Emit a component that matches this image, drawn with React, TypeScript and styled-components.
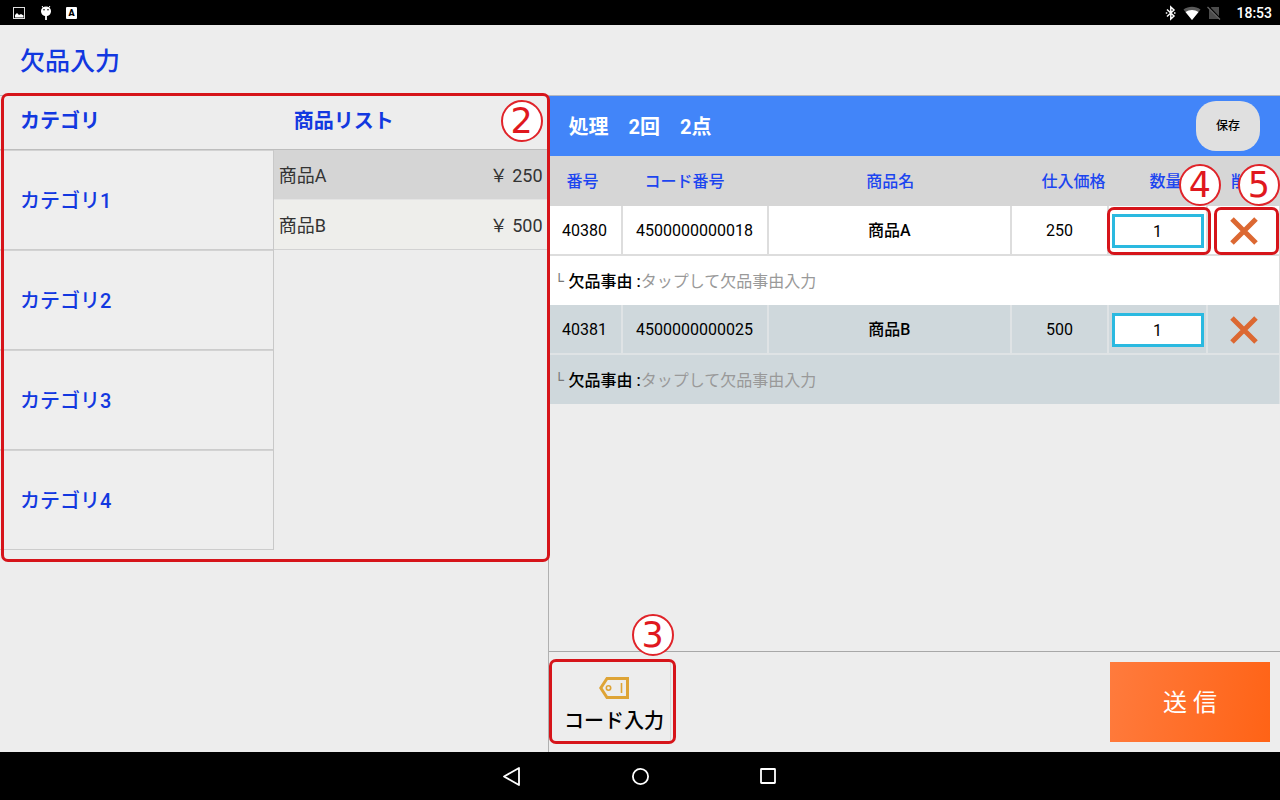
import React, { useState } from "react";
import styled, { createGlobalStyle } from "styled-components";

const GlobalStyle = createGlobalStyle`
  *, *::before, *::after { box-sizing: border-box; }
  body {
    margin: 0;
    background: #ededed;
    color: #000;
    font-family: Roboto, "Noto Sans CJK JP", sans-serif;
  }
  button, input { font: inherit; color: inherit; }
  button { border: 0; padding: 0; background: none; cursor: pointer; }
`;

const Screen = styled.div`
  display: flex;
  flex-direction: column;
  min-height: 100vh;
`;

const StatusBar = styled.div`
  display: flex;
  align-items: center;
  justify-content: space-between;
  height: 25px;
  padding: 0 8px 0 12px;
  background: #000;
  color: #fff;
`;

const StatusGroup = styled.div<{ $gap: number }>`
  display: flex;
  align-items: center;
  gap: ${(p) => p.$gap}px;
`;

const Clock = styled.time`
  margin-left: 9px;
  font-size: 14px;
  font-weight: 500;
  line-height: 20px;
`;

const TitleBar = styled.header`
  display: flex;
  align-items: center;
  height: 71px;
  padding: 4px 20px 0;
  border-bottom: 1px solid #b4b8c0;
`;

const Title = styled.h1`
  margin: 0;
  color: #1238e0;
  font-size: 25px;
  font-weight: 500;
  line-height: 32px;
`;

const Main = styled.main`
  flex: 1;
  display: grid;
  grid-template-columns: 3fr 4fr;
`;

const LeftPane = styled.section`
  border-right: 1px solid #b0b0b0;
`;

const Browser = styled.div`
  position: relative;
`;

const BrowserHead = styled.div`
  display: grid;
  grid-template-columns: 1fr 1fr;
  align-items: center;
  height: 54px;
  padding-bottom: 4px;
  border-bottom: 1px solid #bdbdbd;
`;

const PaneTitle = styled.h2`
  margin: 0;
  padding-left: 20px;
  color: #1238e0;
  font-size: 20px;
  font-weight: 700;
  line-height: 28px;
`;

const BrowserBody = styled.div`
  display: grid;
  grid-template-columns: 1fr 1fr;
  align-items: start;
`;

const CategoryList = styled.ul`
  margin: 0;
  padding: 0;
  list-style: none;
  border-right: 1px solid #c8c8c8;
`;

const CategoryButton = styled.button`
  display: block;
  width: 100%;
  height: 100px;
  padding: 2px 0 0 20px;
  border-top: 1px solid #d2d2d2;
  border-bottom: 1px solid #cccccc;
  background: #eeeeee;
  color: #1238e0;
  font-size: 20px;
  font-weight: 500;
  line-height: 28px;
  text-align: left;
`;

const ProductList = styled.ul`
  margin: 0;
  padding: 0;
  list-style: none;
`;

const ProductButton = styled.button<{ $active?: boolean }>`
  display: flex;
  align-items: center;
  justify-content: space-between;
  width: 100%;
  height: 50px;
  padding: 2px 5px 0;
  border-bottom: 1px solid ${(p) => (p.$active ? "#e4e4e4" : "#d2d2d2")};
  background: ${(p) => (p.$active ? "#d5d5d5" : "#eeeeeb")};
  color: #333;
  font-size: 18px;
  line-height: 26px;
`;

const RightPane = styled.section`
  display: flex;
  flex-direction: column;
`;

const SummaryBar = styled.div`
  display: flex;
  align-items: center;
  justify-content: space-between;
  height: 60px;
  padding: 0 20px;
  background: #4285f9;
`;

const Summary = styled.p`
  margin: 0;
  padding-top: 2px;
  color: #fff;
  font-size: 20px;
  font-weight: 700;
  line-height: 28px;
  white-space: pre;
`;

const SaveButton = styled.button`
  width: 64px;
  height: 50px;
  border-radius: 20px;
  background: #e0e0e0;
  color: #000;
  font-size: 12px;
  font-weight: 500;
  line-height: 16px;
`;

const OrderTable = styled.table`
  width: 100%;
  table-layout: fixed;
  border-collapse: separate;
  border-spacing: 0;
  font-size: 16px;
  line-height: 24px;
`;

const Col = styled.col<{ $width?: number }>`
  width: ${(p) => (p.$width ? `${p.$width}px` : "auto")};
`;

const HeadCell = styled.th<{ $before?: number; $after?: number }>`
  height: 50px;
  padding: 2px ${(p) => p.$after ?? 0}px 0 ${(p) => p.$before ?? 0}px;
  background: #d6d6d6;
  color: #1c45f0;
  font-weight: 500;
  text-align: center;
  white-space: nowrap;
`;

const OrderRows = styled.tbody<{ $shaded: boolean }>`
  --line: ${(p) => (p.$shaded ? "#dfe3e5" : "#dddddd")};
  background: ${(p) => (p.$shaded ? "#cfd8dc" : "#ffffff")};
`;

const Cell = styled.td<{ $strong?: boolean }>`
  position: relative;
  height: 50px;
  padding: 2px 0 0;
  border-right: 2px solid var(--line);
  border-bottom: 2px solid var(--line);
  font-weight: ${(p) => (p.$strong ? 500 : 400)};
  text-align: center;
  &:last-of-type { border-right-width: 1px; }
`;

const ReasonCell = styled.td`
  height: 49px;
  padding: 2px 6px 0;
  border-right: 1px solid var(--line);
`;

const ReasonLine = styled.div`
  display: flex;
  align-items: center;
`;

const Branch = styled.span`
  width: 14px;
  color: #777;
  font-family: "Liberation Mono", monospace;
  font-size: 16px;
`;

const ReasonLabel = styled.span`
  font-weight: 500;
  white-space: pre;
`;

const ReasonButton = styled.button`
  color: #999;
`;

const QuantityInput = styled.input`
  display: block;
  width: 92px;
  max-width: 100%;
  height: 34px;
  margin: 0 auto;
  padding: 0;
  border: 3px solid #2ab9e0;
  background: #fff;
  text-align: center;
  outline: none;
`;

const IconButton = styled.button`
  display: inline-flex;
  align-items: center;
  justify-content: center;
  vertical-align: middle;
`;

const Footer = styled.footer`
  display: flex;
  justify-content: space-between;
  margin-top: auto;
  padding: 10px;
  border-top: 1px solid #a8a8a8;
`;

const CodeEntry = styled.div`
  position: relative;
  display: flex;
`;

const CodeButton = styled.button`
  display: flex;
  flex-direction: column;
  align-items: center;
  justify-content: center;
  gap: 8px;
  width: 112px;
  height: 80px;
  padding-top: 8px;
  border-right: 1px solid #dadada;
  border-bottom: 1px solid #dadada;
  color: #000;
  font-size: 20px;
  font-weight: 500;
  line-height: 28px;
`;

const SendButton = styled.button`
  width: 160px;
  height: 80px;
  padding-top: 2px;
  background: linear-gradient(100deg, #ff7b3d, #ff6316);
  color: #fff;
  font-size: 24px;
  line-height: 32px;
`;

const Callout = styled.div<{ $inset: string }>`
  position: absolute;
  inset: ${(p) => p.$inset};
  z-index: 1;
  border: 3px solid #d6141a;
  border-radius: 7px;
  pointer-events: none;
`;

const CalloutNumber = styled.span<{ $top: number; $right: number }>`
  position: absolute;
  top: ${(p) => p.$top}px;
  right: ${(p) => p.$right}px;
  display: flex;
  align-items: center;
  justify-content: center;
  width: 42px;
  height: 42px;
  border: 2px solid #e0242a;
  border-radius: 50%;
  background: #fff;
  color: #e0181e;
  font-family: "DejaVu Sans", sans-serif;
  font-size: 35px;
  font-weight: 400;
  line-height: 38px;
`;

const NavBar = styled.nav`
  display: flex;
  justify-content: center;
  height: 48px;
  background: #000;
`;

const NavButton = styled.button`
  display: flex;
  align-items: center;
  justify-content: center;
  width: 128px;
`;

const PictureIcon = () => (
  <svg width="14" height="14" viewBox="0 0 14 14" aria-hidden="true">
    <rect x="1.5" y="1.5" width="11" height="11" fill="none" stroke="#ddd" />
    <path d="M3 11.500V9l2-2 2 2 2-1 2.500 1.500v2z" fill="#fff" />
  </svg>
);

const DroidIcon = () => (
  <svg width="12" height="16" viewBox="0 0 12 16" aria-hidden="true">
    <path d="M2 1l1.500 2M10 1l-1.500 2" stroke="#fff" strokeWidth="1" />
    <path d="M1 6a5 4.500 0 0 1 10 0c0 3-2 5-5 5S1 9 1 6z" fill="#fff" />
    <circle cx="4" cy="4.800" r="0.800" />
    <circle cx="8" cy="4.800" r="0.800" />
    <path d="M6 11v4" stroke="#fff" strokeWidth="1.800" />
  </svg>
);

const LetterBadge = styled.span`
  display: flex;
  align-items: center;
  justify-content: center;
  width: 11px;
  height: 12px;
  border-radius: 1px;
  background: #fff;
  color: #000;
  font-size: 9px;
  font-weight: 900;
  line-height: 12px;
`;

const BluetoothIcon = () => (
  <svg width="12" height="16" viewBox="0 0 12 16" aria-hidden="true">
    <path
      d="M2 4.500l7 6.500-3.200 3V2L9 5l-7 6.500"
      fill="none"
      stroke="#fff"
      strokeWidth="1.500"
    />
    <path d="M0.800 7.300h1.500v1.400H0.800zM9 7.300h1.500v1.400H9z" fill="#fff" />
  </svg>
);

const WifiIcon = () => (
  <svg width="18" height="14" viewBox="0 0 18 14" aria-hidden="true">
    <path d="M9 14L0.500 3.500C5.500-0.200 12.500-0.200 17.500 3.500z" fill="#5a5a5a" />
    <path d="M9 14L2.500 6c3.800-2.800 9.200-2.800 13 0z" fill="#fff" />
  </svg>
);

const NoSimIcon = () => (
  <svg width="14" height="14" viewBox="0 0 14 14" aria-hidden="true">
    <path d="M4.500 1H12v12H2V3.500z" fill="#4c4c4c" />
    <path d="M1.500 0.500l12 12.500" stroke="#000" strokeWidth="1.600" />
    <path d="M0.500 1l12.500 12.500" stroke="#666" strokeWidth="1.200" />
  </svg>
);

const CrossIcon = () => (
  <svg width="28" height="28" viewBox="0 0 28 28" aria-hidden="true">
    <path d="M2 2l24 24M26 2L2 26" stroke="#dc6832" strokeWidth="5" />
  </svg>
);

const TagIcon = () => (
  <svg width="30" height="22" viewBox="0 0 30 22" aria-hidden="true">
    <path d="M8 1.500h20.500v19H8L1.800 11z" fill="none" stroke="#dea436" strokeWidth="3" />
    <circle cx="9.500" cy="11" r="2.200" fill="none" stroke="#dea436" strokeWidth="1.600" />
    <path d="M22.500 6v10" stroke="#dea436" strokeWidth="1.600" />
  </svg>
);

const categories = ["カテゴリ1", "カテゴリ2", "カテゴリ3", "カテゴリ4"];

const products = [
  { name: "商品A", price: "250" },
  { name: "商品B", price: "500" },
];

const orders = [
  { id: "40380", code: "4500000000018", name: "商品A", price: "250" },
  { id: "40381", code: "4500000000025", name: "商品B", price: "500" },
];

export default function App() {
  const [quantities, setQuantities] = useState<string[]>(["1", "1"]);

  const changeQuantity = (index: number, value: string) =>
    setQuantities((all) => all.map((q, i) => (i === index ? value : q)));

  return (
    <Screen>
      <GlobalStyle />
      <StatusBar>
        <StatusGroup $gap={14}>
          <PictureIcon />
          <DroidIcon />
          <LetterBadge>A</LetterBadge>
        </StatusGroup>
        <StatusGroup $gap={6}>
          <BluetoothIcon />
          <WifiIcon />
          <NoSimIcon />
          <Clock>18:53</Clock>
        </StatusGroup>
      </StatusBar>

      <TitleBar>
        <Title>欠品入力</Title>
      </TitleBar>

      <Main>
        <LeftPane>
          <Browser>
            <BrowserHead>
              <PaneTitle>カテゴリ</PaneTitle>
              <PaneTitle>商品リスト</PaneTitle>
            </BrowserHead>
            <BrowserBody>
              <CategoryList>
                {categories.map((name) => (
                  <li key={name}>
                    <CategoryButton type="button">{name}</CategoryButton>
                  </li>
                ))}
              </CategoryList>
              <ProductList>
                {products.map((p, i) => (
                  <li key={p.name}>
                    <ProductButton type="button" $active={i === 0}>
                      <span>{p.name}</span>
                      <span>￥ {p.price}</span>
                    </ProductButton>
                  </li>
                ))}
              </ProductList>
            </BrowserBody>
            <Callout $inset="-3px -2px -12px 1px">
              <CalloutNumber $top={4} $right={4}>2</CalloutNumber>
            </Callout>
          </Browser>
        </LeftPane>

        <RightPane>
          <SummaryBar>
            <Summary>処理　2回　2点</Summary>
            <SaveButton type="button">保存</SaveButton>
          </SummaryBar>

          <OrderTable>
            <colgroup>
              <Col $width={74} />
              <Col $width={146} />
              <Col />
              <Col $width={97} />
              <Col $width={99} />
              <Col $width={72} />
            </colgroup>
            <thead>
              <tr>
                <HeadCell scope="col" $after={6}>番号</HeadCell>
                <HeadCell scope="col" $after={22}>コード番号</HeadCell>
                <HeadCell scope="col">商品名</HeadCell>
                <HeadCell scope="col" $before={26}>仕入価格</HeadCell>
                <HeadCell scope="col" $before={14}>数量</HeadCell>
                <HeadCell scope="col" $before={6}>削除</HeadCell>
              </tr>
            </thead>
            {orders.map((o, i) => (
              <OrderRows key={o.id} $shaded={i % 2 === 1}>
                <tr>
                  <Cell>{o.id}</Cell>
                  <Cell>{o.code}</Cell>
                  <Cell $strong>{o.name}</Cell>
                  <Cell>{o.price}</Cell>
                  <Cell>
                    <QuantityInput
                      aria-label={`${o.name} 数量`}
                      inputMode="numeric"
                      value={quantities[i]}
                      onChange={(e) => changeQuantity(i, e.target.value)}
                    />
                    {i === 0 && (
                      <Callout $inset="1px -5px -1px -2px">
                        <CalloutNumber $top={-46} $right={-13}>4</CalloutNumber>
                      </Callout>
                    )}
                  </Cell>
                  <Cell>
                    <IconButton type="button" aria-label={`${o.name} 削除`}>
                      <CrossIcon />
                    </IconButton>
                    {i === 0 && (
                      <Callout $inset="1px 0 -1px 6px">
                        <CalloutNumber $top={-46} $right={-4}>5</CalloutNumber>
                      </Callout>
                    )}
                  </Cell>
                </tr>
                <tr>
                  <ReasonCell colSpan={6}>
                    <ReasonLine>
                      <Branch>└</Branch>
                      <ReasonLabel>欠品事由 :</ReasonLabel>
                      <ReasonButton type="button">タップして欠品事由入力</ReasonButton>
                    </ReasonLine>
                  </ReasonCell>
                </tr>
              </OrderRows>
            ))}
          </OrderTable>

          <Footer>
            <CodeEntry>
              <CodeButton type="button">
                <TagIcon />
                コード入力
              </CodeButton>
              <Callout $inset="-3px -5px -2px -10px">
                <CalloutNumber $top={-48} $right={-1}>3</CalloutNumber>
              </Callout>
            </CodeEntry>
            <SendButton type="submit">送 信</SendButton>
          </Footer>
        </RightPane>
      </Main>

      <NavBar>
        <NavButton type="button" aria-label="戻る">
          <svg width="20" height="20" viewBox="0 0 20 20" aria-hidden="true">
            <path d="M2 10.500L17 2v17z" fill="none" stroke="#fff" strokeWidth="1.800" strokeLinejoin="round" />
          </svg>
        </NavButton>
        <NavButton type="button" aria-label="ホーム">
          <svg width="20" height="20" viewBox="0 0 20 20" aria-hidden="true">
            <circle cx="10.500" cy="10.500" r="7.600" fill="none" stroke="#fff" strokeWidth="1.800" />
          </svg>
        </NavButton>
        <NavButton type="button" aria-label="アプリ履歴">
          <svg width="20" height="20" viewBox="0 0 20 20" aria-hidden="true">
            <rect x="3" y="3" width="14" height="14" rx="0.500" fill="none" stroke="#fff" strokeWidth="1.800" />
          </svg>
        </NavButton>
      </NavBar>
    </Screen>
  );
}
